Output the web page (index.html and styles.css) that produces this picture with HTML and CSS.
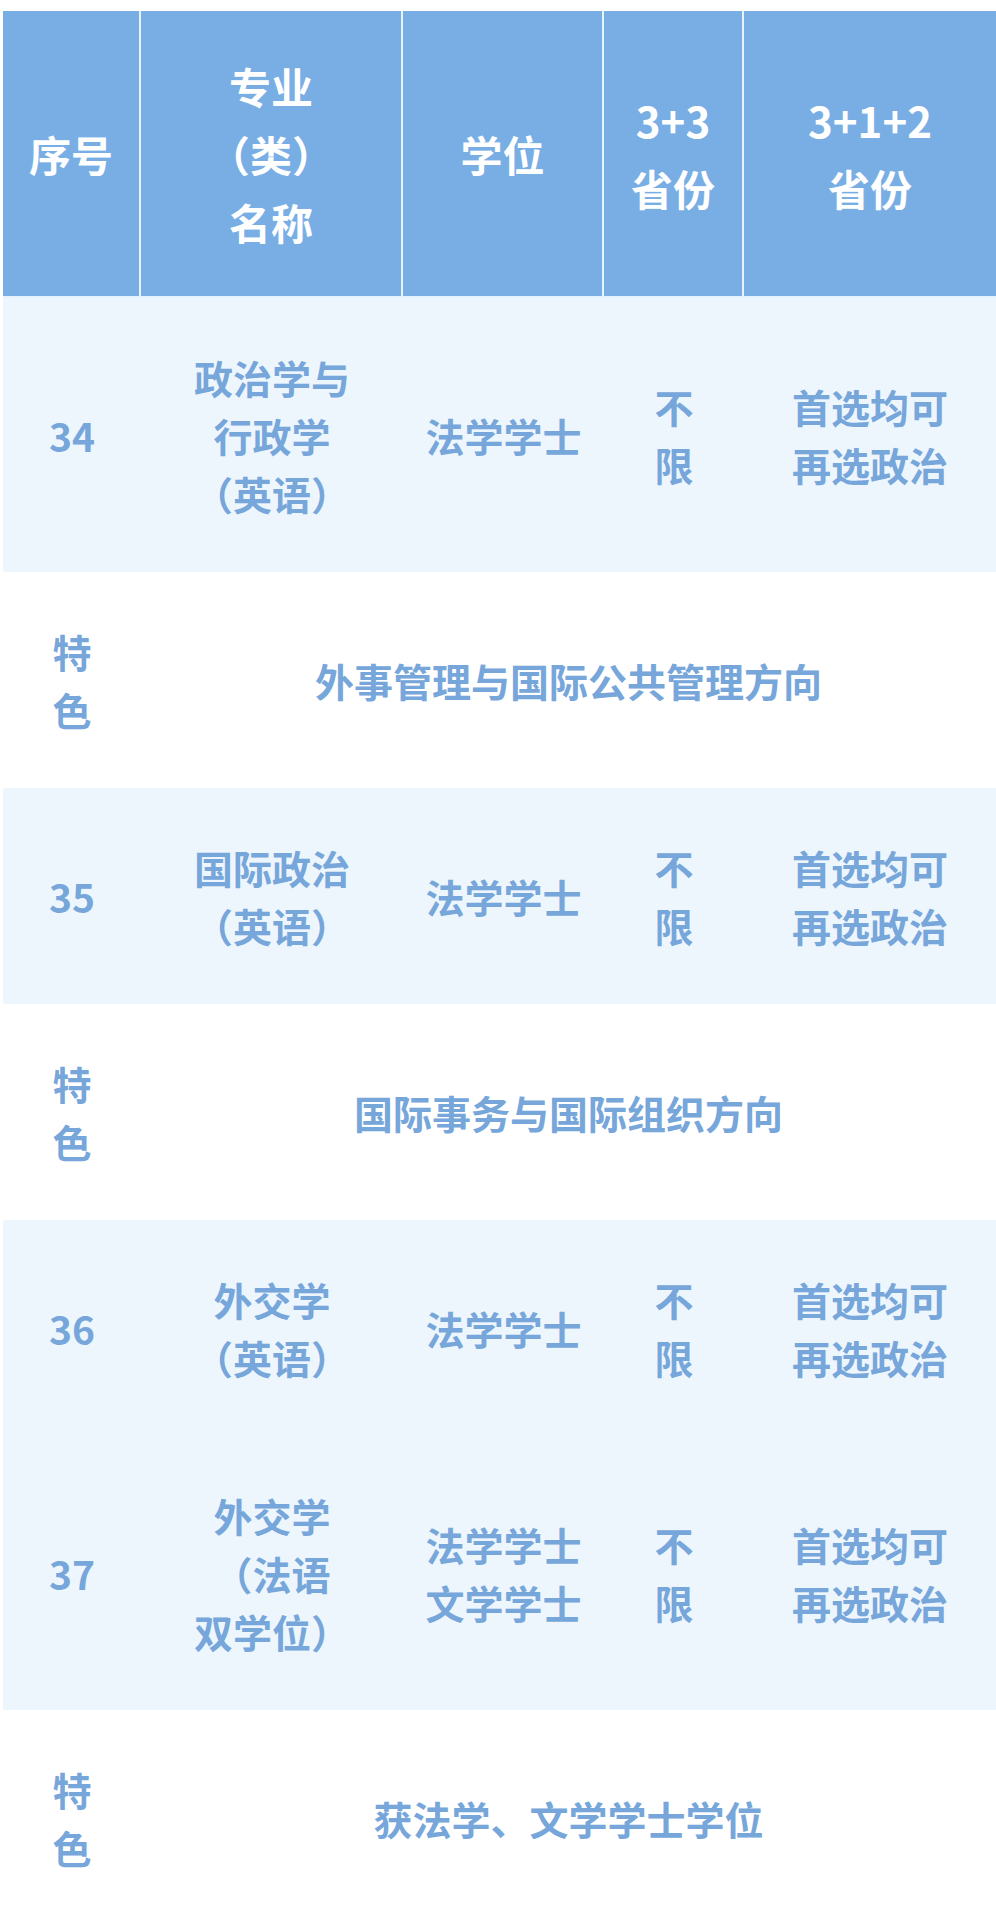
FILE: index.html
```html
<!DOCTYPE html>
<html lang="zh">
<head>
<meta charset="utf-8">
<title>专业表</title>
<link rel="stylesheet" href="styles.css">
</head>
<body>
<table class="majors">
  <colgroup>
    <col class="c1"><col class="c2"><col class="c3"><col class="c4"><col class="c5">
  </colgroup>
  <thead>
    <tr>
      <th>序号</th>
      <th>专业<br>（类）<br>名称</th>
      <th>学位</th>
      <th>3+3<br>省份</th>
      <th class="last">3+1+2<br>省份</th>
    </tr>
  </thead>
  <tbody>
    <tr class="tint">
      <td>34</td>
      <td>政治学与<br>行政学<br>（英语）</td>
      <td>法学学士</td>
      <td>不<br>限</td>
      <td>首选均可<br>再选政治</td>
    </tr>
    <tr class="plain">
      <td>特<br>色</td>
      <td colspan="4">外事管理与国际公共管理方向</td>
    </tr>
    <tr class="tint">
      <td>35</td>
      <td>国际政治<br>（英语）</td>
      <td>法学学士</td>
      <td>不<br>限</td>
      <td>首选均可<br>再选政治</td>
    </tr>
    <tr class="plain">
      <td>特<br>色</td>
      <td colspan="4">国际事务与国际组织方向</td>
    </tr>
    <tr class="tint">
      <td>36</td>
      <td>外交学<br>（英语）</td>
      <td>法学学士</td>
      <td>不<br>限</td>
      <td>首选均可<br>再选政治</td>
    </tr>
    <tr class="tint">
      <td>37</td>
      <td>外交学<br>（法语<br>双学位）</td>
      <td>法学学士<br>文学学士</td>
      <td>不<br>限</td>
      <td>首选均可<br>再选政治</td>
    </tr>
    <tr class="plain">
      <td>特<br>色</td>
      <td colspan="4">获法学、文学学士学位</td>
    </tr>
  </tbody>
</table>
</body>
</html>
```

FILE: styles.css
```css
html, body {
  margin: 0;
  padding: 0;
  background: #ffffff;
}

body {
  padding: 11px 0 0 3px;
  font-family: "Noto Sans CJK SC", "Noto Sans", sans-serif;
}

.majors {
  width: 993px;
  table-layout: fixed;
  border-collapse: separate;
  border-spacing: 0;
}

.c1 { width: 138px; }
.c2 { width: 262px; }
.c3 { width: 201px; }
.c4 { width: 140px; }
.c5 { width: 252px; }

.majors th {
  background: #79aee5;
  color: #ffffff;
  font-size: 42px;
  font-weight: 700;
  line-height: 68px;
  padding: 41px 0 40px;
  text-align: center;
  vertical-align: middle;
  border-right: 2px solid #e6f2fc;
  border-bottom: 2px solid #e6f2fc;
}

.majors th.last {
  border-right: none;
}

.majors td {
  color: #76a6da;
  font-size: 39px;
  font-weight: 700;
  line-height: 58px;
  padding: 50px 0;
  text-align: center;
  vertical-align: middle;
}

.tint td {
  background: #eef6fd;
}

.plain td {
  background: #ffffff;
}
```
